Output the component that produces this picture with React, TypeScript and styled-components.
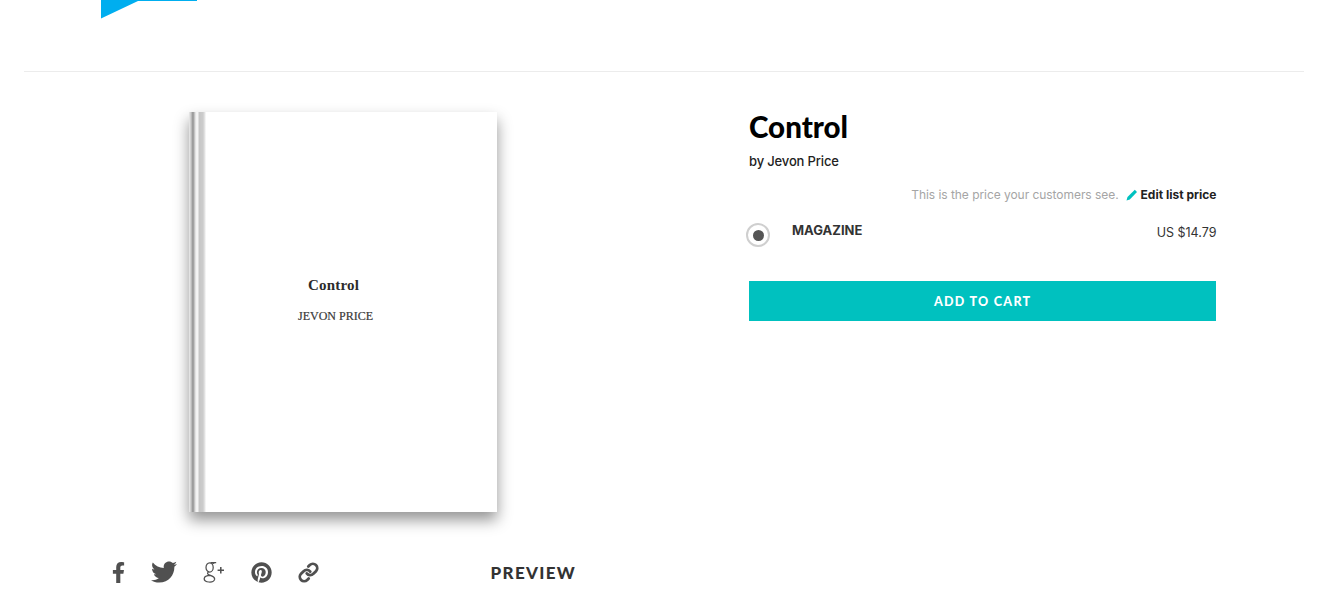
import React from "react";
import styled, { createGlobalStyle } from "styled-components";
import { FaFacebookF, FaTwitter, FaPinterest } from "react-icons/fa";
import { Link as LinkIcon } from "lucide-react";

const Global = createGlobalStyle`
  html, body { margin: 0; padding: 0; background: #fff; }
  body { font-family: Inter, "Liberation Sans", sans-serif; overflow: hidden; }
`;
const Page = styled.div`
  padding: 0 28px 0 24px;
  height: 611px;
  box-sizing: border-box;
`;
const Header = styled.header`
  height: 71px;
  border-bottom: 1px solid #ececec;
  padding-left: 77px;
`;
const Logo = styled.svg`
  display: block;
`;
const Main = styled.main`
  display: flex;
  padding: 40px 0 0 77px;
`;
const Left = styled.section`
  width: 485px;
  flex: none;
`;
const Book = styled.div`
  width: 308px;
  height: 400px;
  margin-left: 88px;
  display: flex;
  background: #fff;
  box-shadow: 0 8px 14px rgba(0, 0, 0, 0.42);
`;
const Spine = styled.div`
  width: 17px;
  flex: none;
  background: linear-gradient(
    90deg,
    #ececec 0,
    #c8c8c8 2px,
    #8f8f8f 4px,
    #b5b5b5 5px,
    #f2f2f2 7px,
    #f6f6f6 9px,
    #c6c6c6 10px,
    #cccccc 14px,
    #e8e8e8 16px,
    #fff 17px
  );
`;
const Cover = styled.div`
  flex: 1;
  display: flex;
  flex-direction: column;
  align-items: center;
  padding-top: 164px;
  font-family: "Liberation Serif", serif;
  color: #2b2b2b;
`;
const CoverTitle = styled.div`
  font-size: 15px;
  font-weight: 700;
  line-height: 18px;
  margin-left: -36px;
  letter-spacing: 0.2px;
`;
const CoverAuthor = styled.div`
  font-size: 12px;
  line-height: 14px;
  margin-top: 15px;
  margin-left: -32px;
  color: #3a3a3a;
  -webkit-text-stroke: 0.2px #3a3a3a;
`;
const Actions = styled.div`
  display: flex;
  align-items: center;
  height: 40px;
  margin-top: 40px;
  padding-left: 10px;
`;
const Socials = styled.div`
  display: flex;
  align-items: center;
  color: #505050;
  flex: 1;
  gap: 26.5px;
`;
const Social = styled.span<{ $w: number; $size: number }>`
  display: flex;
  align-items: center;
  justify-content: center;
  width: ${(p) => p.$w}px;
  height: 24px;
  font-size: ${(p) => p.$size}px;
  svg {
    flex: none;
  }
`;
const Preview = styled.span`
  font-size: 17px;
  font-weight: 900;
  letter-spacing: 1.3px;
  color: #333;
  margin-right: 10px;
  font-family: Lato, sans-serif;
`;
const Right = styled.section`
  width: 467.4px;
  margin-left: 163px;
  flex: none;
  color: #222;
`;
const Title = styled.h1`
  margin: -1px 0 0;
  font-family: Lato, sans-serif;
  font-size: 29.5px;
  line-height: 32px;
  font-weight: 900;
  color: #000;
`;
const Author = styled.div`
  font-size: 13px;
  line-height: 18px;
  margin-top: 9px;
  font-weight: 500;
  letter-spacing: -0.15px;
`;
const Note = styled.div`
  display: flex;
  justify-content: flex-end;
  align-items: center;
  font-size: 12px;
  line-height: 16px;
  margin-top: 17px;
  color: #a5a5a5;
  letter-spacing: -0.05px;
`;
const Pencil = styled.svg`
  margin: 0 3px 0 7px;
`;
const EditLink = styled.span`
  font-weight: 700;
  color: #222;
  letter-spacing: 0;
`;
const Option = styled.div`
  display: flex;
  align-items: center;
  height: 24px;
  margin-top: 20px;
  margin-left: -3px;
`;
const Radio = styled.span`
  width: 24px;
  height: 24px;
  box-sizing: border-box;
  border: 2px solid #cfcfcf;
  border-radius: 50%;
  display: flex;
  align-items: center;
  justify-content: center;
  flex: none;
  &::after {
    content: "";
    width: 11px;
    height: 11px;
    border-radius: 50%;
    background: #555;
  }
`;
const OptionName = styled.span`
  margin-left: 22px;
  font-size: 13px;
  font-weight: 700;
  color: #333;
  position: relative;
  top: -5px;
`;
const OptionPrice = styled.span`
  margin-left: auto;
  font-size: 12.5px;
  color: #333;
  position: relative;
  top: -3px;
`;
const CartButton = styled.button`
  display: block;
  width: 100%;
  height: 40px;
  margin-top: 34px;
  border: 0;
  padding: 0;
  background: #00c1bf;
  color: #fff;
  font-family: Lato, sans-serif;
  font-size: 12.5px;
  font-weight: 900;
  letter-spacing: 1.3px;
`;

const GooglePlus = () => (
  <svg width="22" height="22" viewBox="0 0 22 22" fill="none" stroke="currentColor" strokeWidth="1.25">
    <ellipse cx="6.6" cy="6.4" rx="3.6" ry="4.6" />
    <path d="M7.5 1.6H13.2M10 3.2C9.5 2.6 10.5 2 11.4 2" />
    <path d="M5.4 11C3.6 12.6 5 13.6 8 14.7C10.6 15.7 12 16.6 11.6 18.4C11.1 20.4 8.6 21.2 5.9 21C3 20.8 1 19.5 1.2 17.6C1.4 15.6 4 14.4 7.4 14.4" />
    <path d="M14.6 9.2H21M17.8 6V12.4" strokeWidth="1.5" />
  </svg>
);

export default function App() {
  return (
    <Page>
      <Global />
      <Header>
        <Logo width="96" height="19" viewBox="0 0 96 19">
          <path d="M0 0H96V1H37L0 18.5Z" fill="#00aeef" />
        </Logo>
      </Header>
      <Main>
        <Left>
          <Book>
            <Spine />
            <Cover>
              <CoverTitle>Control</CoverTitle>
              <CoverAuthor>JEVON PRICE</CoverAuthor>
            </Cover>
          </Book>
          <Actions>
            <Socials>
              <Social $w={14} $size={21}><FaFacebookF /></Social>
              <Social $w={25} $size={26}><FaTwitter /></Social>
              <Social $w={22} $size={22}><GooglePlus /></Social>
              <Social $w={20} $size={21}><FaPinterest /></Social>
              <Social $w={20} $size={22}><LinkIcon size={21} strokeWidth={3.2} /></Social>
            </Socials>
            <Preview>PREVIEW</Preview>
          </Actions>
        </Left>
        <Right>
          <Title>Control</Title>
          <Author>by Jevon Price</Author>
          <Note>
            This is the price your customers see.
            <Pencil width="12" height="12" viewBox="0 0 12 12">
              <path d="M0.5 11.5L1.5 8L8.8 0.8L11 3L3.8 10.4Z" fill="#00c1bf" />
            </Pencil>
            <EditLink>Edit list price</EditLink>
          </Note>
          <Option>
            <Radio />
            <OptionName>MAGAZINE</OptionName>
            <OptionPrice>US $14.79</OptionPrice>
          </Option>
          <CartButton>ADD TO CART</CartButton>
        </Right>
      </Main>
    </Page>
  );
}
